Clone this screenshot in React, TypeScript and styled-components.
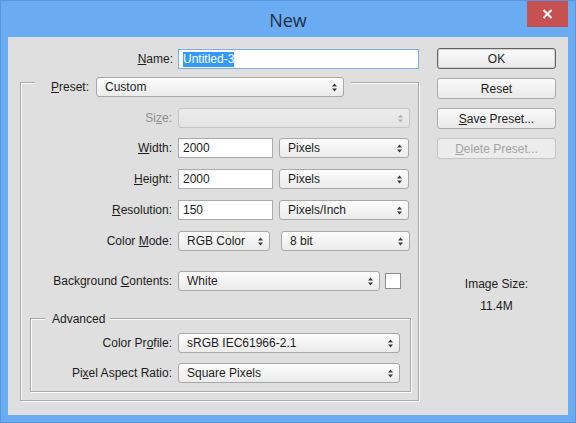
import React from 'react';
import styled, { createGlobalStyle } from 'styled-components';

const Global = createGlobalStyle`
  html, body { margin: 0; padding: 0; background: #6aabf1; }
  body {
    font-family: "Liberation Sans", Arial, sans-serif;
    font-size: 12px;
    color: #1c1c1c;
  }
  #root { width: 576px; height: 423px; }
`;

const PANEL = '#dfdfdf';

const Window = styled.div`
  width: 576px;
  height: 423px;
  box-sizing: border-box;
  background: #6aabf1;
  border: 1px solid #5596e0;
  display: flex;
  flex-direction: column;
`;

const TitleBar = styled.div`
  height: 36px;
  display: grid;
  grid-template-columns: 1fr auto 1fr;
  align-items: center;
`;

const Title = styled.div`
  grid-column: 2;
  font-family: "Open Sans", "Noto Sans", sans-serif;
  font-size: 18px;
  color: #1d2f47;
  line-height: 36px;
  padding-top: 1px;
`;

const CloseButton = styled.div`
  grid-column: 3;
  justify-self: end;
  align-self: start;
  width: 41px;
  height: 26px;
  margin-right: 7px;
  background: #c75050;
  display: flex;
  align-items: center;
  justify-content: center;
`;

const Panel = styled.div`
  margin: 0 7px 7px;
  flex: 1;
  background: ${PANEL};
  display: grid;
  grid-template-columns: 399px 119px;
  column-gap: 18px;
  padding: 11px 0 0 12px;
  align-items: start;
`;

const LeftCol = styled.div`
  display: flex;
  flex-direction: column;
`;

const RightCol = styled.div`
  display: flex;
  flex-direction: column;
`;

const Row = styled.div<{ $mt?: number; $gap?: number }>`
  display: flex;
  align-items: center;
  gap: 6px;
  margin-top: ${p => p.$mt ?? 0}px;
  & > * + * + * { margin-left: ${p => (p.$gap ?? 6) - 6}px; }
`;

const Label = styled.div<{ $w: number; $disabled?: boolean }>`
  width: ${p => p.$w}px;
  text-align: right;
  white-space: nowrap;
  color: ${p => (p.$disabled ? '#8e8e8e' : '#1c1c1c')};
`;

const NameRow = styled(Row)`
  gap: 5px;
  margin-top: 1px;
`;

const TextBox = styled.div<{ $w: number; $focus?: boolean }>`
  width: ${p => p.$w}px;
  height: 20px;
  box-sizing: border-box;
  border: 1px solid ${p => (p.$focus ? '#7eaee6' : '#a9abb1')};
  background: #fff;
  padding-left: 4px;
  display: flex;
  align-items: center;
  white-space: nowrap;
`;

const Selected = styled.span`
  background: #3399ff;
  color: #fff;
  line-height: 15px;
`;

const SelectBox = styled.div<{ $w: number; $disabled?: boolean }>`
  width: ${p => p.$w}px;
  height: 20px;
  box-sizing: border-box;
  border: 1px solid ${p => (p.$disabled ? '#c6c6c6' : '#a8a8a8')};
  border-radius: 3px;
  background: ${p =>
    p.$disabled ? 'linear-gradient(#ececec, #e4e4e4)' : 'linear-gradient(#fdfdfd, #ebebeb)'};
  display: flex;
  align-items: center;
  justify-content: space-between;
  padding: 0 5px 0 8px;
  white-space: nowrap;
  color: ${p => (p.$disabled ? '#9a9a9a' : '#1c1c1c')};
`;

const Swatch = styled.div`
  width: 16px;
  height: 16px;
  box-sizing: border-box;
  border: 1px solid #8c8c8c;
  background: #fff;
`;

const GroupBox = styled.div<{ $mt: number; $ml?: number; $pb: number; $pr?: number }>`
  margin-top: ${p => p.$mt}px;
  margin-left: ${p => p.$ml ?? 0}px;
  padding: 0 ${p => p.$pr ?? 0}px ${p => p.$pb}px 0;
  border: 1px solid #a9a9a9;
  box-shadow: inset 1px 1px 0 #fbfbfb, 1px 1px 0 #fbfbfb;
  display: flex;
  flex-direction: column;
`;

const GroupHeader = styled.div<{ $mt: number; $ml: number; $pl: number; $pr: number; $h: number }>`
  align-self: flex-start;
  margin: ${p => p.$mt}px 0 0 ${p => p.$ml}px;
  padding: 0 ${p => p.$pr}px 0 ${p => p.$pl}px;
  height: ${p => p.$h}px;
  line-height: ${p => p.$h}px;
  background: ${PANEL};
  display: flex;
  align-items: center;
  gap: 7px;
`;

const ButtonStack = styled.div`
  display: flex;
  flex-direction: column;
  gap: 9px;
`;

const Button = styled.div<{ $default?: boolean; $disabled?: boolean }>`
  height: 21px;
  box-sizing: border-box;
  border: 1px solid ${p => (p.$default ? '#626262' : p.$disabled ? '#c4c4c4' : '#acacac')};
  border-radius: 3px;
  background: ${p => (p.$disabled ? '#ececec' : 'linear-gradient(#fafafa, #e9e9e9)')};
  box-shadow: ${p => (p.$default ? 'inset 0 0 0 1px #d2d2d2' : 'none')};
  color: ${p => (p.$disabled ? '#a3a3a3' : '#1c1c1c')};
  display: flex;
  align-items: center;
  justify-content: center;
`;

const InfoText = styled.div<{ $mt: number }>`
  margin-top: ${p => p.$mt}px;
  text-align: center;
  line-height: 15px;
  color: #1c1c1c;
`;

const Arrows: React.FC<{ color: string }> = ({ color }) => (
  <svg width="7" height="9" viewBox="0 0 7 9" aria-hidden="true">
    <path d="M3.5 0.5 L6 3.5 L1 3.5 Z M3.5 8.5 L6 5.5 L1 5.5 Z" fill={color} />
  </svg>
);

const Select: React.FC<{ w: number; value?: string; disabled?: boolean }> = ({ w, value, disabled }) => (
  <SelectBox $w={w} $disabled={disabled}>
    <span>{value ?? ''}</span>
    <Arrows color={disabled ? '#b0b0b0' : '#3a3a3a'} />
  </SelectBox>
);

export default function App() {
  return (
    <>
      <Global />
      <Window>
        <TitleBar>
          <Title>New</Title>
          <CloseButton>
            <svg width="11" height="10" viewBox="0 0 11 10" aria-hidden="true">
              <path d="M1.5 1 L9.5 9 M9.5 1 L1.5 9" stroke="#fff" strokeWidth="2" />
            </svg>
          </CloseButton>
        </TitleBar>
        <Panel>
          <LeftCol>
            <NameRow>
              <Label $w={153}>
                <u>N</u>ame:
              </Label>
              <TextBox $w={241} $focus>
                <Selected>Untitled-3</Selected>
              </TextBox>
            </NameRow>

            <GroupBox $mt={13} $pb={8} $pr={7}>
              <GroupHeader $mt={-6} $ml={14} $pl={16} $pr={7} $h={20}>
                <span>
                  <u>P</u>reset:
                </span>
                <Select w={248} value="Custom" />
              </GroupHeader>

              <Row $mt={11}>
                <Label $w={151} $disabled>
                  Si<u>z</u>e:
                </Label>
                <Select w={232} disabled />
              </Row>
              <Row $mt={10}>
                <Label $w={151}>
                  <u>W</u>idth:
                </Label>
                <TextBox $w={95}>2000</TextBox>
                <Select w={130} value="Pixels" />
              </Row>
              <Row $mt={11}>
                <Label $w={151}>
                  <u>H</u>eight:
                </Label>
                <TextBox $w={95}>2000</TextBox>
                <Select w={130} value="Pixels" />
              </Row>
              <Row $mt={11}>
                <Label $w={151}>
                  <u>R</u>esolution:
                </Label>
                <TextBox $w={95}>150</TextBox>
                <Select w={130} value="Pixels/Inch" />
              </Row>
              <Row $mt={11} $gap={11}>
                <Label $w={151}>
                  Color <u>M</u>ode:
                </Label>
                <Select w={92} value="RGB Color" />
                <Select w={129} value="8 bit" />
              </Row>
              <Row $mt={20} $gap={5}>
                <Label $w={151}>
                  Background <u>C</u>ontents:
                </Label>
                <Select w={202} value="White" />
                <Swatch />
              </Row>

              <GroupBox $mt={27} $ml={9} $pb={8}>
                <GroupHeader $mt={-7} $ml={14} $pl={7} $pr={5} $h={14}>
                  Advanced
                </GroupHeader>
                <Row $mt={7}>
                  <Label $w={141}>
                    Color Pr<u>o</u>file:
                  </Label>
                  <Select w={222} value="sRGB IEC61966-2.1" />
                </Row>
                <Row $mt={10}>
                  <Label $w={141}>
                    Pi<u>x</u>el Aspect Ratio:
                  </Label>
                  <Select w={222} value="Square Pixels" />
                </Row>
              </GroupBox>
            </GroupBox>
          </LeftCol>

          <RightCol>
            <ButtonStack>
              <Button $default>OK</Button>
              <Button>Reset</Button>
              <Button>
                <span>
                  <u>S</u>ave Preset...
                </span>
              </Button>
              <Button $disabled>
                <span>
                  <u>D</u>elete Preset...
                </span>
              </Button>
            </ButtonStack>
            <InfoText $mt={118}>Image Size:</InfoText>
            <InfoText $mt={7}>11.4M</InfoText>
          </RightCol>
        </Panel>
      </Window>
    </>
  );
}
